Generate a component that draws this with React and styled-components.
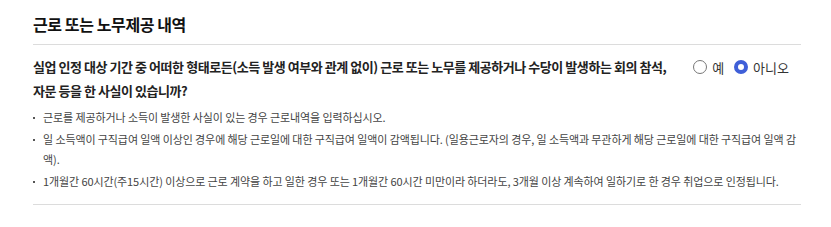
import React, { useState } from 'react';
import styled, { createGlobalStyle } from 'styled-components';

const GlobalStyle = createGlobalStyle`
    body {
        margin: 0;
        background: #fff;
        font-family: 'Noto Sans CJK KR', 'Noto Sans', sans-serif;
    }
`;

const Section = styled.section`
    width: 768px;
    padding: 12px 0 0 33px;
`;

const Title = styled.h2`
    margin: 0;
    padding-bottom: 8px;
    font-size: 16px;
    font-weight: 700;
    color: #111;
    letter-spacing: -0.4px;
    border-bottom: 1px solid #dcdcdc;
`;

const QuestionRow = styled.div`
    display: flex;
    justify-content: space-between;
    align-items: flex-start;
    padding-top: 10px;
`;

const Question = styled.p`
    margin: 0;
    width: 650px;
    font-size: 13px;
    line-height: 24px;
    font-weight: 700;
    color: #222;
    letter-spacing: -0.45px;
    word-break: keep-all;
`;

const RadioGroup = styled.div`
    display: flex;
    gap: 10px;
    padding-right: 12px;
    height: 24px;
    align-items: center;
`;

const RadioLabel = styled.label`
    display: flex;
    align-items: center;
    gap: 5px;
    font-size: 13px;
    color: #333;
    cursor: pointer;
`;

const RadioCircle = styled.span`
    box-sizing: border-box;
    width: 14px;
    height: 14px;
    border-radius: 50%;
    border: ${p => (p.checked ? '4px solid #3f5fd8' : '1px solid #777')};
    background: #fff;
`;

const NoteList = styled.ul`
    list-style: none;
    margin: 0;
    padding: 4px 0 13px;
    border-bottom: 1px solid #dcdcdc;
`;

const NoteItem = styled.li`
    position: relative;
    padding-left: 10px;
    margin-top: 2px;
    font-size: 11px;
    line-height: 20px;
    color: #444;
    letter-spacing: -0.1px;

    &:first-child {
        margin-top: 0;
    }

    &::before {
        content: '';
        position: absolute;
        left: 0;
        top: 10px;
        width: 2px;
        height: 2px;
        background: #555;
    }
`;

const notes = [
    '근로를 제공하거나 소득이 발생한 사실이 있는 경우 근로내역을 입력하십시오.',
    '일 소득액이 구직급여 일액 이상인 경우에 해당 근로일에 대한 구직급여 일액이 감액됩니다. (일용근로자의 경우, 일 소득액과 무관하게 해당 근로일에 대한 구직급여 일액 감액).',
    '1개월간 60시간(주15시간) 이상으로 근로 계약을 하고 일한 경우 또는 1개월간 60시간 미만이라 하더라도, 3개월 이상 계속하여 일하기로 한 경우 취업으로 인정됩니다.',
];

const App = () => {
    const [answer, setAnswer] = useState('no');
    return (
        <>
            <GlobalStyle />
            <Section>
                <Title>근로 또는 노무제공 내역</Title>
                <QuestionRow>
                    <Question>
                        실업 인정 대상 기간 중 어떠한 형태로든(소득 발생 여부와 관계 없이) 근로 또는 노무를 제공하거나 수당이 발생하는 회의 참석, 자문 등을 한 사실이 있습니까?
                    </Question>
                    <RadioGroup>
                        <RadioLabel onClick={() => setAnswer('yes')}>
                            <RadioCircle checked={answer === 'yes'} />예
                        </RadioLabel>
                        <RadioLabel onClick={() => setAnswer('no')}>
                            <RadioCircle checked={answer === 'no'} />아니오
                        </RadioLabel>
                    </RadioGroup>
                </QuestionRow>
                <NoteList>
                    {notes.map((n, i) => (
                        <NoteItem key={i}>{n}</NoteItem>
                    ))}
                </NoteList>
            </Section>
        </>
    );
};

export default App;
